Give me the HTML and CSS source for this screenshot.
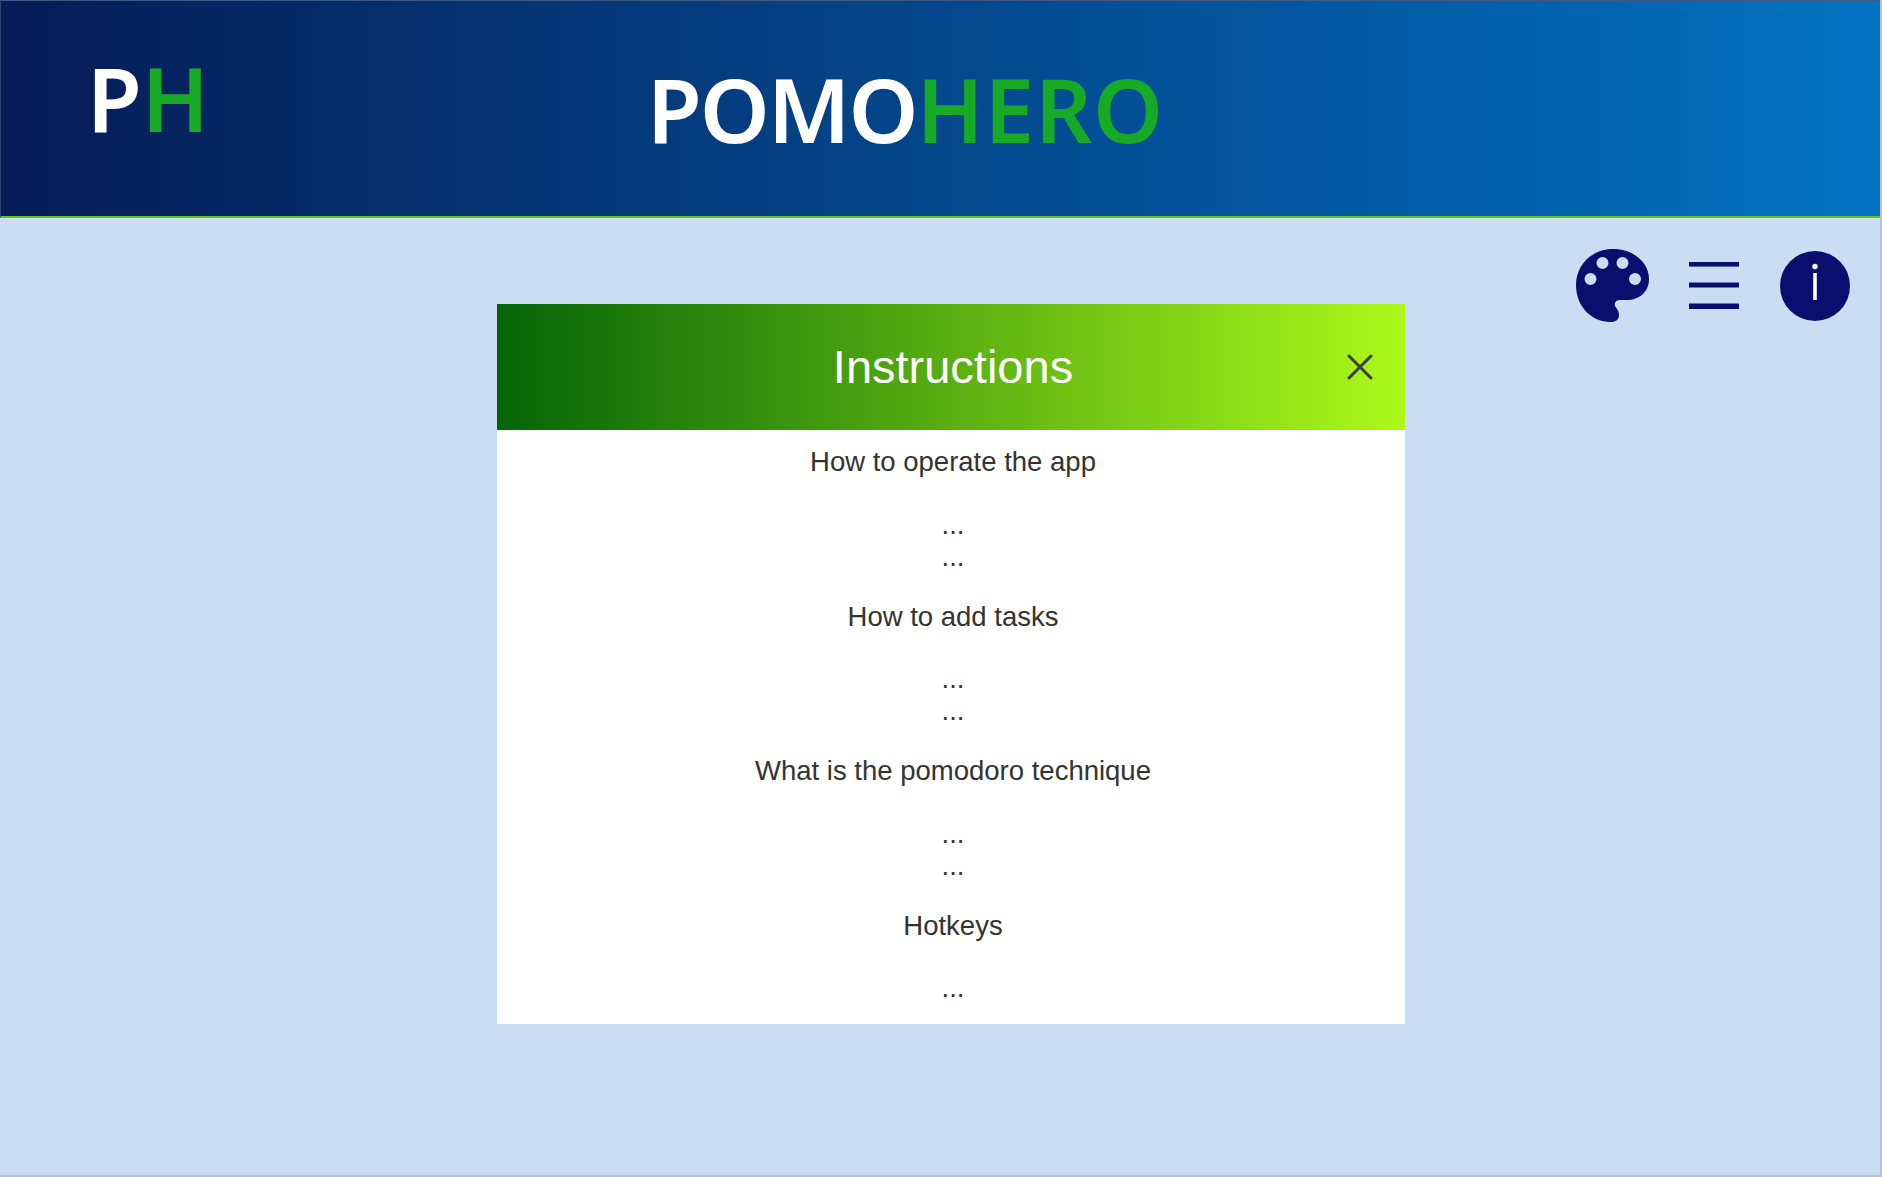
FILE: index.html
```html
<!DOCTYPE html>
<html lang="en">
<head>
    <meta charset="UTF-8">
    <meta name="viewport" content="width=device-width, initial-scale=1.0">
    <title>PomoHero</title>
    <link rel="stylesheet" href="styles.css">
</head>
<body>
    <div class="page">
        <header class="header">
            <div class="logo">P<span class="green">H</span></div>
            <h1 class="brand"><span class="pomo">POMO</span><span class="green hero">HERO</span></h1>
        </header>

        <main class="main">
            <div class="toolbar">
                <svg class="icon-palette" viewBox="0 0 73 73" aria-label="Theme">
                    <path class="navy" fill-rule="evenodd" d="M37 0C57 0 73 13 73 30C73 43 63 51 51 51H44C40 51 38 54 39 57C40 59 43 61 43 66C43 71 39 73 35 73C15 73 0 57 0 36C0 16 16 0 37 0ZM26.500 8A6 6 0 1 0 26.500 20A6 6 0 1 0 26.500 8ZM46.500 8A6 6 0 1 0 46.500 20A6 6 0 1 0 46.500 8ZM14.500 24A6 6 0 1 0 14.500 36A6 6 0 1 0 14.500 24ZM59 24A6 6 0 1 0 59 36A6 6 0 1 0 59 24Z"/>
                </svg>
                <svg class="burger" viewBox="0 0 50 47" aria-label="Menu">
                    <rect class="navy" y="0" width="50" height="4.600"/>
                    <rect class="navy" y="20.500" width="50" height="5"/>
                    <rect class="navy" y="41.500" width="50" height="5.500"/>
                </svg>
                <svg class="icon-info" viewBox="0 0 70 70" aria-label="Info">
                    <circle class="navy" cx="35" cy="35" r="35"/>
                    <circle cx="35" cy="15.500" r="2.700" fill="#fff"/>
                    <rect x="33.200" y="22" width="3.600" height="27" fill="#fff"/>
                </svg>
            </div>

            <section class="modal">
                <div class="modal-head">
                    <h2>Instructions</h2>
                    <svg class="close" viewBox="0 0 26 26" aria-label="Close">
                        <path d="M2 2L24 24M24 2L2 24"/>
                    </svg>
                </div>
                <div class="modal-body">
                    <h3>How to operate the app</h3>
                    <p>...<br>...</p>
                    <h3>How to add tasks</h3>
                    <p>...<br>...</p>
                    <h3>What is the pomodoro technique</h3>
                    <p>...<br>...</p>
                    <h3>Hotkeys</h3>
                    <p>...</p>
                </div>
            </section>
        </main>
    </div>
</body>
</html>
```

FILE: styles.css
```css
* {
    box-sizing: border-box;
}
html, body {
    margin: 0;
    padding: 0;
    height: 100%;
}
body {
    font-family: "Liberation Sans", Arial, sans-serif;
    background-color: #cbddf3;
}
.page {
    height: 100vh;
    display: flex;
    flex-direction: column;
    border-right: 2px solid #b4c3d3;
    border-bottom: 2px solid #b4c3d3;
    overflow: hidden;
}
.header {
    height: 218px;
    flex-shrink: 0;
    display: flex;
    align-items: flex-start;
    background: linear-gradient(to right, #061c56, #0272c2);
    border-top: 1px solid #3c5a84;
    border-left: 1px solid #2c4a70;
    border-bottom: 2px solid #62c41e;
    font-family: "Noto Sans", sans-serif;
    font-weight: 600;
    color: #fff;
}
.green {
    color: #17aa27;
}
.logo {
    width: 646px;
    padding-left: 86px;
    padding-top: 35px;
    font-size: 89px;
    line-height: 124px;
}
.brand {
    margin: 0;
    padding-top: 46px;
    font-size: 89px;
    line-height: 124px;
    font-weight: 600;
}
.pomo {
    letter-spacing: -2px;
}
.hero {
    letter-spacing: 0.8px;
}
.main {
    flex: 1;
    position: relative;
}
.toolbar {
    display: flex;
    justify-content: flex-end;
    align-items: center;
    padding: 31px 30px 0 0;
}
.navy {
    fill: #0a0f6f;
}
.icon-palette {
    width: 73px;
    height: 73px;
    margin-right: 40px;
}
.burger {
    width: 50px;
    height: 47px;
    margin-right: 41px;
}
.icon-info {
    width: 70px;
    height: 70px;
}
.modal {
    position: absolute;
    left: 497px;
    top: 86px;
    width: 908px;
    height: 720px;
    background: #fff;
    overflow: hidden;
}
.modal-head {
    height: 126px;
    position: relative;
    display: flex;
    align-items: center;
    justify-content: center;
    background: linear-gradient(to right, #056508, #adf91a);
    padding-bottom: 2px;
}
.modal-head h2 {
    margin: 0;
    padding-left: 4px;
    font-size: 47px;
    font-weight: 400;
    color: #fff;
}
.close {
    position: absolute;
    right: 32px;
    top: 50px;
    width: 26px;
    height: 26px;
}
.close path {
    fill: none;
    stroke: #3f3f3f;
    stroke-width: 3;
    stroke-linecap: round;
}
.modal-body {
    padding: 16px 0 0 4px;
    text-align: center;
    color: #333;
    font-size: 27.5px;
    line-height: 32px;
}
.modal-body h3 {
    margin: 0 0 30.6px;
    font-size: inherit;
    font-weight: 400;
}
.modal-body p {
    margin: 0 0 28px;
}
```
